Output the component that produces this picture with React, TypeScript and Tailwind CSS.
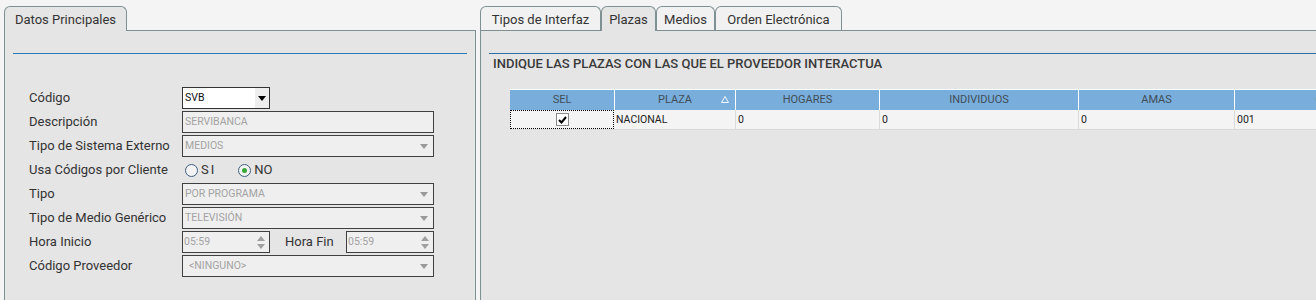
import React from "react";

const border = "border-[#7f9093]";

function Tab({ label, active, w }: { label: string; active?: boolean; w: string }) {
  return (
    <div
      className={`${w} shrink-0 ${active ? "h-[25px] -mb-[1px] bg-[#e5e5e5] relative z-10" : "h-[24px] bg-[#f1f1f1]"} border border-b-0 ${border} rounded-t-[6px] pt-[3px] leading-[20px] text-[13px] text-[#333] text-center whitespace-nowrap`}
    >
      {label}
    </div>
  );
}

function Arrow({ color = "#9a9a9a" }: { color?: string }) {
  return (
    <svg width="8" height="5" viewBox="0 0 8 5">
      <path d="M0 0H8L4 5Z" fill={color} />
    </svg>
  );
}

function DisabledSelect({ value, w = "w-[252px]", pl = "pl-[2px]" }: { value: string; w?: string; pl?: string }) {
  return (
    <div className={`${w} h-[22px] border border-[#404040] bg-[#efefef] flex items-center ${pl} pr-[5px]`}>
      <span className="flex-1 text-[10.5px] text-[#a3a3a3] leading-none">{value}</span>
      <Arrow />
    </div>
  );
}

function Spinner({ value }: { value: string }) {
  return (
    <div className="w-[88px] h-[22px] border border-[#404040] bg-[#efefef] flex items-center pl-[1px] pr-[4px]">
      <span className="flex-1 text-[10.5px] text-[#a3a3a3] leading-none">{value}</span>
      <div className="flex flex-col items-center gap-[3px]">
        <svg width="8" height="5" viewBox="0 0 8 5">
          <path d="M4 0L8 5H0Z" fill="#a0a0a0" />
        </svg>
        <svg width="8" height="5" viewBox="0 0 8 5">
          <path d="M0 0H8L4 5Z" fill="#a0a0a0" />
        </svg>
      </div>
    </div>
  );
}

function Row({ label, children }: { label: string; children: React.ReactNode }) {
  return (
    <div className="flex h-[22px] items-center">
      <div className="w-[153px] text-[13px] text-[#333] leading-[22px] whitespace-nowrap">{label}</div>
      {children}
    </div>
  );
}

function Radio({ checked }: { checked?: boolean }) {
  return (
    <span className="w-[13px] h-[13px] rounded-full border border-[#3f5d80] bg-[#f3f3f3] flex items-center justify-center">
      {checked && <span className="w-[5px] h-[5px] rounded-full bg-[#3aa83a]" />}
    </span>
  );
}

const cols = [
  { h: "SEL", w: "w-[104px]" },
  { h: "PLAZA", w: "w-[121px]" },
  { h: "HOGARES", w: "w-[144px]" },
  { h: "INDIVIDUOS", w: "w-[199px]" },
  { h: "AMAS", w: "w-[156px]" },
  { h: "CÓDIGO", w: "w-[202px]" },
];

export default function App() {
  return (
    <div className="w-[1316px] h-[300px] overflow-hidden bg-[#f4f4f4] flex items-start gap-[4px] pl-[4px] pt-[6px] font-['Roboto',sans-serif]">
      {/* Left panel */}
      <div className="w-[472px] shrink-0 flex flex-col">
        <div className="flex items-end h-[24px]">
          <Tab label="Datos Principales" active w="w-[123px]" />
        </div>
        <div className={`h-[300px] border ${border} bg-[#e5e5e5] px-[8px]`}>
          <div className="mt-[22px] h-[1px] bg-[#2b78b8]" />
          <div className="mt-[33px] pl-[16px] flex flex-col gap-[2px]">
            <Row label="Código">
              <div className="w-[88px] h-[22px] border border-[#333] bg-white flex items-stretch">
                <span className="flex-1 pl-[2px] text-[10.5px] text-[#111] flex items-center">SVB</span>
                <span className="w-[14px] bg-[#eeeeee] flex items-center justify-center">
                  <Arrow color="#000" />
                </span>
              </div>
            </Row>
            <Row label="Descripción">
              <div className="w-[252px] h-[22px] border border-[#404040] bg-[#efefef] flex items-center pl-[2px]">
                <span className="text-[10.5px] text-[#a3a3a3] leading-none">SERVIBANCA</span>
              </div>
            </Row>
            <Row label="Tipo de Sistema Externo">
              <DisabledSelect value="MEDIOS" />
            </Row>
            <Row label="Usa Códigos por Cliente">
              <div className="flex items-center ml-[3px] text-[13px] text-[#333]">
                <Radio />
                <span className="ml-[3px] tracking-[2px]">SI</span>
                <span className="ml-[22px]">
                  <Radio checked />
                </span>
                <span className="ml-[3px]">NO</span>
              </div>
            </Row>
            <Row label="Tipo">
              <DisabledSelect value="POR PROGRAMA" />
            </Row>
            <Row label="Tipo de Medio Genérico">
              <DisabledSelect value="TELEVISIÓN" />
            </Row>
            <Row label="Hora Inicio">
              <Spinner value="05:59" />
              <span className="ml-[15px] w-[61px] text-[13px] text-[#333]">Hora Fin</span>
              <Spinner value="05:59" />
            </Row>
            <Row label="Código Proveedor">
              <DisabledSelect value="<NINGUNO>" pl="pl-[6px]" />
            </Row>
          </div>
        </div>
      </div>

      {/* Right panel */}
      <div className="w-[860px] shrink-0 flex flex-col">
        <div className="flex items-end h-[24px]">
          <Tab label="Tipos de Interfaz" w="w-[121px]" />
          <Tab label="Plazas" active w="w-[55px]" />
          <Tab label="Medios" w="w-[59px]" />
          <Tab label="Orden Electrónica" w="w-[127px]" />
        </div>
        <div className={`h-[300px] border ${border} bg-[#e5e5e5]`}>
          <div className="mt-[22px] ml-[8px] h-[1px] bg-[#2b6fa8]" />
          <div className="h-[20px] leading-[20px] pl-[12px] text-[13px] font-medium text-[#3a3a3a] whitespace-nowrap">
            INDIQUE LAS PLAZAS CON LAS QUE EL PROVEEDOR INTERACTUA
          </div>
          <div className="mt-[15px] ml-[29px] w-[926px]">
            <div className="flex border-t border-white bg-[#79addb] h-[21px]">
              {cols.map((c, i) => (
                <div
                  key={c.h}
                  className={`${c.w} shrink-0 ${i > 0 ? "border-l border-white" : ""} relative flex items-center justify-center text-[11px] text-[#414d57]`}
                >
                  {c.h}
                  {c.h === "PLAZA" && (
                    <svg className="absolute right-[6px] top-[6px]" width="8" height="7" viewBox="0 0 8 7">
                      <path d="M4 0.5L7.5 6.5H0.5Z" fill="none" stroke="#f4f8fc" strokeWidth="1" />
                    </svg>
                  )}
                </div>
              ))}
            </div>
            <div className="flex h-[20px] bg-[#f4f4f4] border-b border-[#dadada]">
              <div className="w-[104px] shrink-0 border border-dotted border-black flex items-center justify-center">
                <span className="w-[13px] h-[13px] border border-[#8a8a8a] bg-white flex items-center justify-center">
                  <svg width="9" height="8" viewBox="0 0 9 8">
                    <path d="M1 4L3.5 6.5L8 1" fill="none" stroke="#000" strokeWidth="2" />
                  </svg>
                </span>
              </div>
              <div className="w-[121px] shrink-0 pl-[2px] flex items-center text-[10.5px] text-[#222]">NACIONAL</div>
              <div className="w-[144px] shrink-0 border-l border-[#dadada] pl-[2px] flex items-center text-[10.5px] text-[#222]">0</div>
              <div className="w-[199px] shrink-0 border-l border-[#dadada] pl-[2px] flex items-center text-[10.5px] text-[#222]">0</div>
              <div className="w-[156px] shrink-0 border-l border-[#dadada] pl-[2px] flex items-center text-[10.5px] text-[#222]">0</div>
              <div className="w-[202px] shrink-0 border-l border-[#dadada] pl-[2px] flex items-center text-[10.5px] text-[#222]">001</div>
            </div>
          </div>
        </div>
      </div>
    </div>
  );
}
